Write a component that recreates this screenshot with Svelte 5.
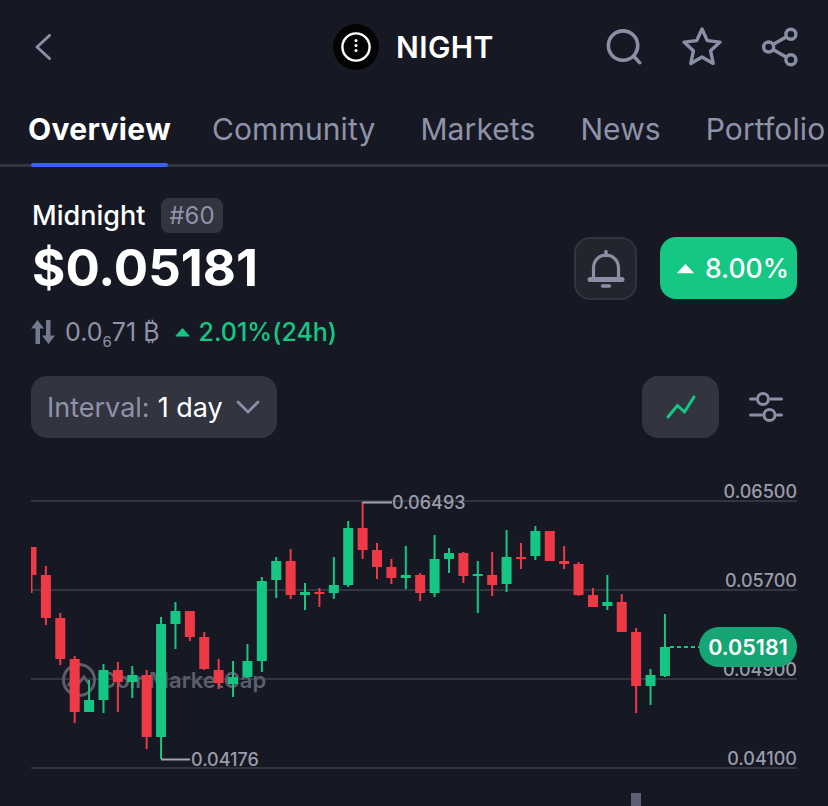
<script lang="ts">
	const UP = '#16c784';
	const DOWN = '#ee3a46';

	// wick top, wick bottom, body top, body bottom, up?
	const candles: [number, number, number, number, number][] = [
		[547, 593, 547, 575, 0],
		[566, 625, 575, 618, 0],
		[613, 665, 618, 659, 0],
		[656, 723, 659, 712, 0],
		[680, 712, 700, 712, 1],
		[664, 713, 670, 700, 1],
		[662, 712, 670, 682, 0],
		[666, 698, 675, 682, 1],
		[670, 749, 675, 737, 0],
		[617, 759, 624, 737, 1],
		[602, 649, 611, 624, 1],
		[611, 641, 611, 637, 0],
		[632, 670, 637, 669, 0],
		[659, 689, 670, 683, 0],
		[661, 697, 677, 684, 1],
		[644, 678, 661, 677, 1],
		[577, 672, 581, 661, 1],
		[557, 598, 561, 580, 1],
		[549, 599, 561, 595, 0],
		[583, 610, 592, 595, 1],
		[588, 607, 592, 594, 0],
		[557, 599, 585, 593, 1],
		[521, 587, 528, 585, 1],
		[502, 559, 528, 550, 0],
		[543, 579, 550, 567, 0],
		[559, 584, 567, 578, 0],
		[546, 589, 575, 578, 1],
		[573, 601, 575, 593, 0],
		[535, 597, 559, 593, 1],
		[548, 573, 553, 559, 1],
		[552, 583, 553, 576, 0],
		[561, 613, 574, 576, 1],
		[552, 596, 575, 585, 0],
		[530, 592, 557, 584, 1],
		[543, 569, 557, 559, 0],
		[526, 560, 531, 556, 1],
		[531, 561, 531, 561, 0],
		[546, 569, 561, 564, 0],
		[562, 596, 564, 595, 0],
		[588, 607, 595, 607, 0],
		[575, 610, 602, 606, 1],
		[594, 632, 602, 632, 0],
		[628, 713, 632, 686, 0],
		[669, 705, 675, 686, 1],
		[614, 677, 647, 676, 1]
	];

	const grid = [
		{ y: 501, label: '0.06500' },
		{ y: 590, label: '0.05700' },
		{ y: 679, label: '0.04900' },
		{ y: 768, label: '0.04100' }
	];

	const tabs = ['Overview', 'Community', 'Markets', 'News', 'Portfolio'];
</script>

<div class="page">
	<header class="topbar">
		<svg class="back" viewBox="0 0 18 26" width="18" height="26" fill="none">
			<path d="M15.5 1.5 3 13l12.500 11.500" stroke="#8a8fa5" stroke-width="3" stroke-linecap="round" stroke-linejoin="round" />
		</svg>
		<div class="coin">
			<svg viewBox="0 0 46 46" width="46" height="46">
				<circle cx="23" cy="23" r="23" fill="#040404" />
				<circle cx="23" cy="23" r="13.6" fill="none" stroke="#fff" stroke-width="2.4" />
				<circle cx="23" cy="16.5" r="1.5" fill="#fff" />
				<circle cx="23" cy="21.5" r="1.5" fill="#fff" />
				<circle cx="23" cy="26.5" r="1.5" fill="#fff" />
			</svg>
			<span>NIGHT</span>
		</div>
		<div class="actions">
			<svg viewBox="0 0 38 38" width="36" height="36" fill="none" stroke="#8a8fa5" stroke-width="3.8" stroke-linecap="round">
				<circle cx="18" cy="17.5" r="15.5" />
				<path d="m29.5 29 6 6.5" />
			</svg>
			<svg viewBox="0 0 42 42" width="42" height="42" fill="none" stroke="#8a8fa5" stroke-width="3.4" stroke-linejoin="round">
				<path d="m21 3 5.300 11.600 12.700 1.500-9.400 8.700 2.600 12.600L21 31l-11.200 6.400 2.600-12.600L3 16.100l12.700-1.500z" />
			</svg>
			<svg viewBox="0 0 38 42" width="36" height="40" fill="none" stroke="#8a8fa5" stroke-width="3.6">
				<circle cx="30.500" cy="7.500" r="5.300" />
				<circle cx="7" cy="21" r="5.300" />
				<circle cx="30.500" cy="34.500" r="5.300" />
				<path d="m11.600 18.300 14.300-8.200M11.600 23.700l14.300 8.200" />
			</svg>
		</div>
	</header>

	<nav class="tabs">
		{#each tabs as tab, i}
			<span class="tab" class:active={i === 0}>{tab}</span>
		{/each}
	</nav>

	<section class="summary">
		<div class="left">
			<div class="name">
				<span>Midnight</span>
				<span class="rank">#60</span>
			</div>
			<div class="price">$0.05181</div>
		</div>
		<div class="right">
			<button class="bell" aria-label="alert">
				<svg viewBox="0 0 38 40" width="38" height="40" fill="none">
					<path d="M19 2.500v4" stroke="#8a8fa5" stroke-width="3.400" stroke-linecap="round" />
					<path d="M6.500 29V19c0-7.500 5.300-12.800 12.500-12.800S31.500 11.500 31.500 19v10" stroke="#8a8fa5" stroke-width="3.200" />
					<path d="M3 30.500h32" stroke="#8a8fa5" stroke-width="5" stroke-linecap="round" />
					<path d="M15.500 37h7" stroke="#8a8fa5" stroke-width="3.400" stroke-linecap="round" />
				</svg>
			</button>
			<div class="change">
				<svg viewBox="0 0 20 12" width="19" height="11"><path d="M10 1 19 10.500a.6.6 0 0 1-.4.800H1.400a.6.6 0 0 1-.4-.800z" fill="#fff" /></svg>
				<span>8.00%</span>
			</div>
		</div>
	</section>

	<div class="btc">
		<svg viewBox="0 0 24 24" width="24" height="24" fill="#737a90">
			<path d="M6.500 0 13 8.500H9V24H4.500V8.500H0zM17.500 24 11 15.500h4V0h4.500v15.500H24z" />
		</svg>
		<span class="sats">0.0<sub>6</sub>71 ₿</span>
		<svg class="tri" viewBox="0 0 16 10" width="15" height="9"><path d="M8 .5 15.500 9H.5z" fill="#16c784" stroke="#16c784" stroke-linejoin="round" /></svg>
		<span class="pct">2.01%(24h)</span>
	</div>

	<div class="controls">
		<div class="interval">
			<span class="muted">Interval:</span>
			<span>1 day</span>
			<svg viewBox="0 0 24 14" width="24" height="14" fill="none">
				<path d="m2 2 10 10L22 2" stroke="#8a8fa5" stroke-width="2.800" stroke-linecap="round" stroke-linejoin="round" />
			</svg>
		</div>
		<div class="tools">
			<div class="linebtn">
				<svg viewBox="0 0 32 26" width="32" height="26" fill="none">
					<path d="m3 23 9.500-11.500 7 6.500L29 3" stroke="#16c784" stroke-width="3" stroke-linecap="round" stroke-linejoin="round" />
				</svg>
			</div>
			<svg class="filter" viewBox="0 0 34 30" width="34" height="30" fill="none" stroke="#8a8fa5" stroke-width="3" stroke-linecap="round">
				<path d="M1.500 7h5M22 7h10.500M1.500 23h11M28 23h4.500" />
				<circle cx="14" cy="7" r="5.500" />
				<circle cx="20.500" cy="23" r="5.500" />
			</svg>
		</div>
	</div>

	<svg class="chart" viewBox="0 470 828 336" width="828" height="336">
		<defs>
			<clipPath id="plot"><rect x="31" y="470" width="797" height="336" /></clipPath>
		</defs>

		{#each grid as g}
			<line x1="31" x2="797" y1={g.y} y2={g.y} stroke="#32343f" stroke-width="2" />
			<text class="axis" x="797" y={g.y - 3} text-anchor="end">{g.label}</text>
		{/each}

		<g class="watermark" fill="#5b5e6c">
			<circle cx="79" cy="680" r="15.500" fill="none" stroke="#5b5e6c" stroke-width="3" />
			<path d="m68 686 6-9 5 6 5-6 5 7" fill="none" stroke="#5b5e6c" stroke-width="3" />
			<text x="100" y="688">CoinMarketCap</text>
		</g>

		<g clip-path="url(#plot)">
			{#each candles as c, i}
				{@const x = 31.500 + i * 14.396}
				{@const color = c[4] ? UP : DOWN}
				<line x1={x} x2={x} y1={c[0]} y2={c[1]} stroke={color} stroke-width="2" />
				<rect x={x - 5} y={c[2]} width="10" height={Math.max(c[3] - c[2], 2)} fill={color} />
			{/each}
		</g>

		<path d="M362.500 502.500H392" stroke="#a1a3b2" stroke-width="2" fill="none" />
		<text class="axis" x="392" y="509">0.06493</text>
		<path d="M161 759.500H190" stroke="#a1a3b2" stroke-width="2" fill="none" />
		<text class="axis" x="191" y="766">0.04176</text>

		<line x1="670" x2="700" y1="647" y2="647" stroke={UP} stroke-width="2" stroke-dasharray="4 3" />
		<rect x="699" y="627" width="98" height="40" rx="20" fill="#16a673" />
		<text class="last" x="748" y="654.500" text-anchor="middle">0.05181</text>

		<rect x="631" y="793" width="10" height="13" fill="#5a5f74" />
	</svg>
</div>

<style>
	:global(body) {
		background: #161923;
	}

	.page {
		width: 828px;
		height: 806px;
		overflow: hidden;
		background: #161923;
		color: #fff;
		font-family: Inter, 'Liberation Sans', sans-serif;
	}

	.topbar {
		display: flex;
		align-items: center;
		justify-content: space-between;
		height: 94px;
		padding: 0 30px 0 34px;
		box-sizing: border-box;
	}

	.coin {
		display: flex;
		align-items: center;
		gap: 17px;
		font-size: 30px;
		font-weight: 600;
		letter-spacing: 0.4px;
		margin-left: 281px;
	}

	.actions {
		display: flex;
		align-items: center;
		gap: 39px;
		margin-left: auto;
	}

	.tabs {
		display: flex;
		gap: 45px;
		height: 73px;
		padding-left: 28px;
		box-sizing: border-box;
		border-bottom: 3px solid #32343f;
		white-space: nowrap;
	}

	.tab {
		position: relative;
		font-size: 30px;
		line-height: 70px;
		color: #8f93a8;
		letter-spacing: 0.1px;
	}

	.tab.active {
		color: #fff;
		font-weight: 700;
		letter-spacing: 0.35px;
		margin-right: -4px;
	}

	.tab.active::after {
		content: '';
		position: absolute;
		left: 3px;
		right: 3px;
		bottom: -3px;
		height: 4px;
		border-radius: 2px;
		background: #3861fb;
	}

	.summary {
		display: flex;
		justify-content: space-between;
		padding: 31px 31px 0 32px;
	}

	.name {
		display: flex;
		align-items: center;
		gap: 16px;
		font-size: 27px;
		font-weight: 500;
	}

	.rank {
		padding: 0 8px;
		height: 35px;
		line-height: 35px;
		border-radius: 8px;
		background: #32343f;
		color: #8f93a8;
		font-size: 24px;
		font-weight: 400;
	}

	.price {
		font-size: 51px;
		font-weight: 700;
		line-height: 70px;
	}

	.right {
		display: flex;
		align-items: flex-start;
		gap: 23px;
		padding-top: 39px;
	}

	.bell {
		width: 63px;
		height: 63px;
		padding: 0;
		display: flex;
		align-items: center;
		justify-content: center;
		box-sizing: border-box;
		border: 2px solid #32343f;
		border-radius: 16px;
		background: #22242e;
	}

	.change {
		display: flex;
		align-items: center;
		gap: 10px;
		width: 137px;
		height: 62px;
		box-sizing: border-box;
		padding-left: 16px;
		border-radius: 16px;
		background: #16c784;
		font-size: 26.5px;
		font-weight: 500;
	}

	.btc {
		display: flex;
		align-items: center;
		height: 32px;
		margin-top: 13px;
		padding-left: 31px;
		font-size: 25px;
	}

	.sats {
		margin-left: 10px;
		color: #8f93a8;
	}

	.sats sub {
		font-size: 15px;
		line-height: 0;
		vertical-align: -6px;
	}

	.tri {
		margin-left: 15px;
	}

	.pct {
		margin-left: 9px;
		color: #16c784;
		font-weight: 500;
	}

	.controls {
		display: flex;
		justify-content: space-between;
		align-items: center;
		margin-top: 28px;
		padding: 0 45px 0 31px;
	}

	.interval {
		display: flex;
		align-items: center;
		gap: 8px;
		width: 246px;
		height: 62px;
		box-sizing: border-box;
		padding-left: 16px;
		border-radius: 16px;
		background: #32343f;
		font-size: 27px;
	}

	.interval svg {
		margin-left: 5px;
	}

	.muted {
		color: #8f93a8;
	}

	.tools {
		display: flex;
		align-items: center;
		gap: 30px;
	}

	.linebtn {
		display: flex;
		align-items: center;
		justify-content: center;
		width: 77px;
		height: 62px;
		border-radius: 16px;
		background: #32343f;
	}

	.chart {
		display: block;
		margin-top: 32px;
	}

	.axis {
		font-size: 18px;
		font-weight: 500;
		fill: #9a9cab;
	}

	.last {
		font-size: 21.5px;
		font-weight: 600;
		fill: #fff;
	}

	.watermark text {
		font-size: 22px;
		font-weight: 600;
	}
</style>
